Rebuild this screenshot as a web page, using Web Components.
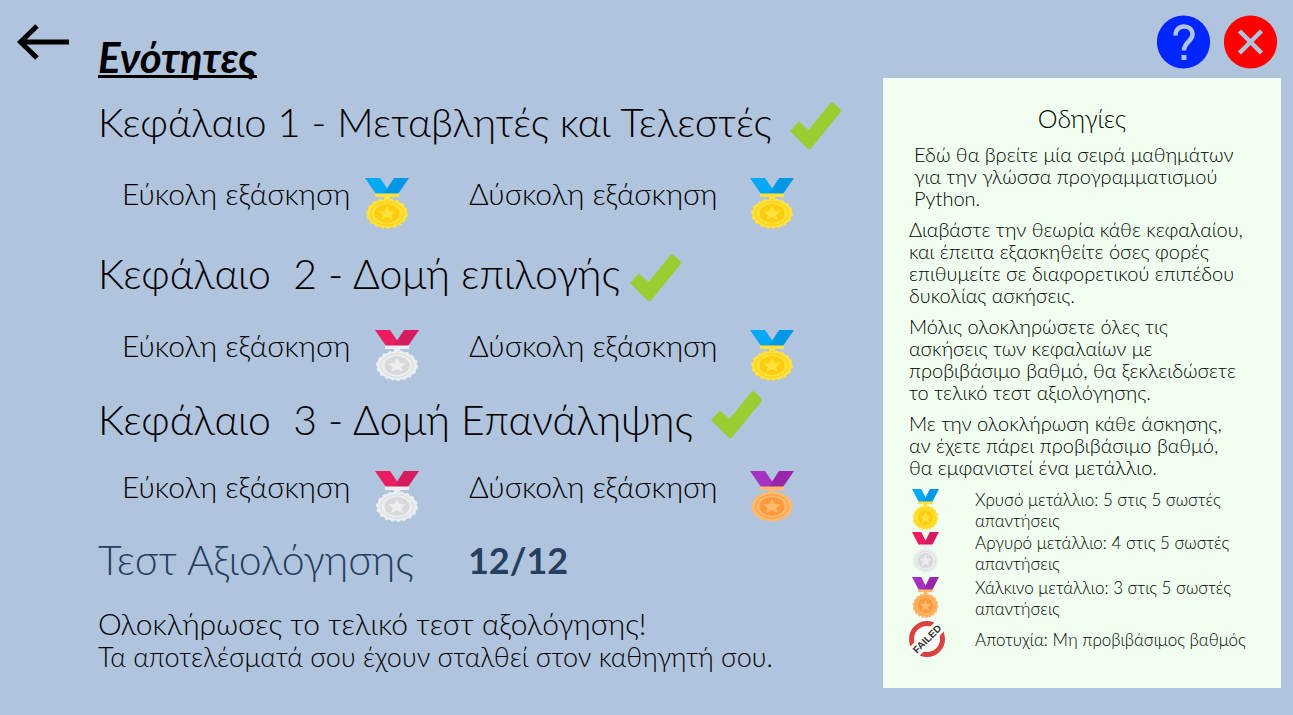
<!DOCTYPE html>
<html lang="el">
<head>
<meta charset="utf-8">
<meta name="viewport" content="width=device-width, initial-scale=1">
<title>Ενότητες</title>
<style>
  html { background: #b0c4de; }
  body { margin: 0; background: #b0c4de; color: #000; font-family: Lato, "Open Sans", sans-serif; font-weight: 300; }
</style>
</head>
<body>
<units-page></units-page>

<template id="t-page">
  <style>
    :host { display: grid; grid-template-columns: 98px minmax(0, 785fr) minmax(0, 398fr); padding: 15px 12px 27px 0; min-height: 100vh; box-sizing: border-box; }
    .back { padding: 9px 0 0 17px; }
    main { min-width: 0; padding-top: 16px; }
    h1 { margin: 0 0 19px; font-size: 42px; line-height: 52px; height: 52px; font-weight: 700; font-style: italic; }
    h1 span { border-bottom: 3px solid; display: inline-block; line-height: 50px; height: 43px; }
    .test { display: flex; align-items: center; gap: 54px; margin: 13px 0 22px; color: #243f60; line-height: 48px; }
    h2 { margin: 0; font-size: 41px; font-weight: 300; }
    .score { font-size: 36px; font-weight: 700; }
    p { margin: 0; line-height: 34px; font-size: 30px; white-space: nowrap; }
    p.sent { font-size: 27px; }
    aside { display: flex; flex-direction: column; }
    nav { display: flex; justify-content: flex-end; gap: 13px; padding: 0 3px 9px 0; }
    guide-panel { flex: 1; }
  </style>
  <div class="back"><icon-button kind="back" label="Πίσω"></icon-button></div>
  <main>
    <h1><span>Ενότητες</span></h1>
    <chapter-block>Κεφάλαιο 1 - Μεταβλητές και Τελεστές
      <award-medal slot="easy" kind="gold"></award-medal>
      <award-medal slot="hard" kind="gold"></award-medal>
    </chapter-block>
    <chapter-block class="short">Κεφάλαιο&nbsp; 2 - Δομή επιλογής
      <award-medal slot="easy" kind="silver"></award-medal>
      <award-medal slot="hard" kind="gold"></award-medal>
    </chapter-block>
    <chapter-block class="last">Κεφάλαιο&nbsp; 3 - Δομή Επανάληψης
      <award-medal slot="easy" kind="silver"></award-medal>
      <award-medal slot="hard" kind="bronze"></award-medal>
    </chapter-block>
    <div class="test"><h2>Τεστ Αξιολόγησης</h2><span class="score">12/12</span></div>
    <p>Ολοκλήρωσες το τελικό τεστ αξολόγησης!</p>
    <p class="sent">Τα αποτελέσματά σου έχουν σταλθεί στον καθηγητή σου.</p>
  </main>
  <aside>
    <nav>
      <icon-button kind="help" label="Βοήθεια"></icon-button>
      <icon-button kind="close" label="Κλείσιμο"></icon-button>
    </nav>
    <guide-panel></guide-panel>
  </aside>
</template>

<template id="t-chapter">
  <style>
    :host { display: block; margin-bottom: 24px; }
    :host(.short) { margin-bottom: 9px; }
    :host(.last) { margin-bottom: 0; }
    header { display: flex; align-items: flex-start; gap: 18px; height: 48px; margin-bottom: 28px; }
    :host(.short) header { gap: 10px; }
    :host(.last) header { height: 55px; margin-bottom: 25px; }
    h2 { margin: 0; font-size: 40px; font-weight: 300; line-height: 40px; white-space: nowrap; }
    :host(.short) h2, :host(.last) h2 { font-size: 41px; }
    :host(.last) h2 { margin-top: 9px; }
    svg { width: 51px; height: 48px; flex: none; }
    .row { display: grid; grid-template-columns: 243px 104px 281px 44px; padding-left: 24px; height: 52px; font-size: 30px; line-height: 30px; white-space: nowrap; }
    ::slotted([kind="silver"][slot="easy"]) { margin-left: 10px; }
  </style>
  <header>
    <h2><slot></slot></h2>
    <svg viewBox="0 0 51 48" role="img" aria-label="Ολοκληρώθηκε"><path fill="#9acd32" d="M0 29 9 19.500 18.500 28 40 1.500Q41.500-.5 43.500 1L50 7Q51.500 9 50 11L20.500 47 18.500 47.500Z"/></svg>
  </header>
  <div class="row">
    <span>Εύκολη εξάσκηση</span><slot name="easy"></slot>
    <span>Δύσκολη εξάσκηση</span><slot name="hard"></slot>
  </div>
</template>

<template id="t-medal">
  <style>
    :host { display: block; width: 44px; height: 52px; --l: #03a9f4; --r: #0098e6; --rim: #ffe13b; --disc: #fdcc0c; }
    :host([kind="silver"]) { --l: #eb1c60; --r: #d61c61; --rim: #eceff1; --disc: #d8d9da; }
    :host([kind="bronze"]) { --l: #a632c4; --r: #9825ac; --rim: #ffb96b; --disc: #ff983d; }
    :host([small]) { width: 27px; height: 42px; }
    svg { display: block; width: 100%; height: 100%; }
  </style>
  <svg viewBox="0 0 44 52" preserveAspectRatio="none" aria-hidden="true">
    <path fill="var(--l)" d="M0 0H15L26 16H11Z"/>
    <path fill="var(--r)" d="M29 0H44L33 16H18.500Z"/>
    <path fill="var(--rim)" d="M10 15.500H34V19H25V21H19V19H10Z"/>
    <ellipse cx="22" cy="35.500" rx="20" ry="14.300" fill="var(--rim)"/>
    <ellipse cx="22" cy="35.500" rx="20" ry="14.300" fill="none" stroke="var(--rim)" stroke-width="2" stroke-dasharray="3 3"/>
    <ellipse cx="22" cy="35.500" rx="16.500" ry="11.800" fill="none" stroke="var(--disc)"/>
    <ellipse cx="22" cy="35.500" rx="12.500" ry="9.500" fill="var(--disc)"/>
    <path fill="var(--rim)" d="m22 28 2.700 5 6.300.5-4.800 3.500 1.800 5-6-2.700L16 42l1.800-5-4.800-3.500 6.300-.5Z"/>
  </svg>
</template>

<template id="t-button">
  <style>
    :host { display: block; }
    button { display: block; padding: 0; border: 0; background: none; color: inherit; cursor: pointer; }
    svg { display: none; width: 54px; height: 54px; }
    :host([kind="back"]) .back { display: block; width: 53px; height: 37px; }
    :host([kind="help"]) .help, :host([kind="close"]) .close { display: block; }
  </style>
  <button type="button">
    <svg class="back" viewBox="0 0 53 37"><path d="M20 2 3.500 18 20 34M4 18H52" fill="none" stroke="#000" stroke-width="5"/></svg>
    <svg class="help" viewBox="0 0 54 54"><circle cx="26.500" cy="27" r="26.600" fill="#0026ff"/><path d="M18.500 20.500C18.500 14.500 22 11.500 27 11.500S35.500 14.500 35.500 19.500C35.500 26 27 27 27 35.500" fill="none" stroke="#b0c4de" stroke-width="4.500"/><path fill="#b0c4de" d="M24.500 40h5v5h-5z"/></svg>
    <svg class="close" viewBox="0 0 54 54"><circle cx="26.500" cy="27" r="26.600" fill="#f00"/><path d="M15.500 16 37.500 38M37.500 16 15.500 38" fill="none" stroke="#b0c4de" stroke-width="4.500"/></svg>
  </button>
</template>

<template id="t-stamp">
  <style>
    :host { display: block; width: 36px; height: 36px; }
    svg { display: block; overflow: visible; }
    text { font: 700 10px "Liberation Sans", sans-serif; }
  </style>
  <svg width="36" height="36" viewBox="0 0 36 36">
    <circle cx="18" cy="18" r="15.500" fill="#fff" stroke="#d9433f" stroke-width="5"/>
    <g transform="rotate(-45 18 18)">
      <path fill="#fff" d="M-1 11.500H37V24.500H-1Z"/>
      <text x="18" y="21.500" text-anchor="middle" fill="#333">FAILED</text>
    </g>
  </svg>
</template>

<template id="t-guide">
  <style>
    :host { display: block; background: #f0fff0; padding: 24px 26px 20px 26px; box-sizing: border-box; }
    h2 { margin: 0 0 8px; font-size: 25px; font-weight: 300; line-height: 33px; text-align: center; }
    p { margin: 0 0 9px; font-size: 20px; line-height: 22px; white-space: nowrap; }
    p.intro { padding-left: 5px; }
    ul { margin: 10px 0 0; padding: 0; list-style: none; font-size: 17px; line-height: 21px; }
    li { display: grid; grid-template-columns: 66px 1fr; align-items: center; min-height: 43px; white-space: nowrap; }
    li.wide { min-height: 47px; }
    li.fail { min-height: 36px; }
    award-medal { margin-left: 3px; }
  </style>
  <h2>Οδηγίες</h2>
  <p class="intro">Εδώ θα βρείτε μία σειρά μαθημάτων<br>για την γλώσσα προγραμματισμού<br>Python.</p>
  <p>Διαβάστε την θεωρία κάθε κεφαλαίου,<br>και έπειτα εξασκηθείτε όσες φορές<br>επιθυμείτε σε διαφορετικού επιπέδου<br>δυκολίας ασκήσεις.</p>
  <p>Μόλις ολοκληρώσετε όλες τις<br>ασκήσεις των κεφαλαίων με<br>προβιβάσιμο βαθμό, θα ξεκλειδώσετε<br>το τελικό τεστ αξιολόγησης.</p>
  <p>Με την ολοκλήρωση κάθε άσκησης,<br>αν έχετε πάρει προβιβάσιμο βαθμό,<br>θα εμφανιστεί ένα μετάλλιο.</p>
  <ul>
    <li><award-medal small kind="gold"></award-medal><span>Χρυσό μετάλλιο: 5 στις 5 σωστές<br>απαντήσεις</span></li>
    <li><award-medal small kind="silver"></award-medal><span>Αργυρό μετάλλιο: 4 στις 5 σωστές<br>απαντήσεις</span></li>
    <li class="wide"><award-medal small kind="bronze"></award-medal><span>Χάλκινο μετάλλιο: 3 στις 5 σωστές<br>απαντήσεις</span></li>
    <li class="fail"><failed-stamp></failed-stamp><span>Αποτυχία: Μη προβιβάσιμος βαθμός</span></li>
  </ul>
</template>

<script>
  class TemplateElement extends HTMLElement {
    constructor() {
      super();
      const tpl = document.getElementById(this.constructor.template);
      this.attachShadow({ mode: 'open' }).append(tpl.content.cloneNode(true));
    }
  }
  class AwardMedal extends TemplateElement { static template = 't-medal'; }
  class FailedStamp extends TemplateElement { static template = 't-stamp'; }
  class ChapterBlock extends TemplateElement { static template = 't-chapter'; }
  class GuidePanel extends TemplateElement { static template = 't-guide'; }
  class UnitsPage extends TemplateElement { static template = 't-page'; }
  class IconButton extends TemplateElement {
    static template = 't-button';
    connectedCallback() {
      this.shadowRoot.querySelector('button').setAttribute('aria-label', this.getAttribute('label'));
    }
  }
  customElements.define('award-medal', AwardMedal);
  customElements.define('failed-stamp', FailedStamp);
  customElements.define('icon-button', IconButton);
  customElements.define('chapter-block', ChapterBlock);
  customElements.define('guide-panel', GuidePanel);
  customElements.define('units-page', UnitsPage);
</script>
</body>
</html>
